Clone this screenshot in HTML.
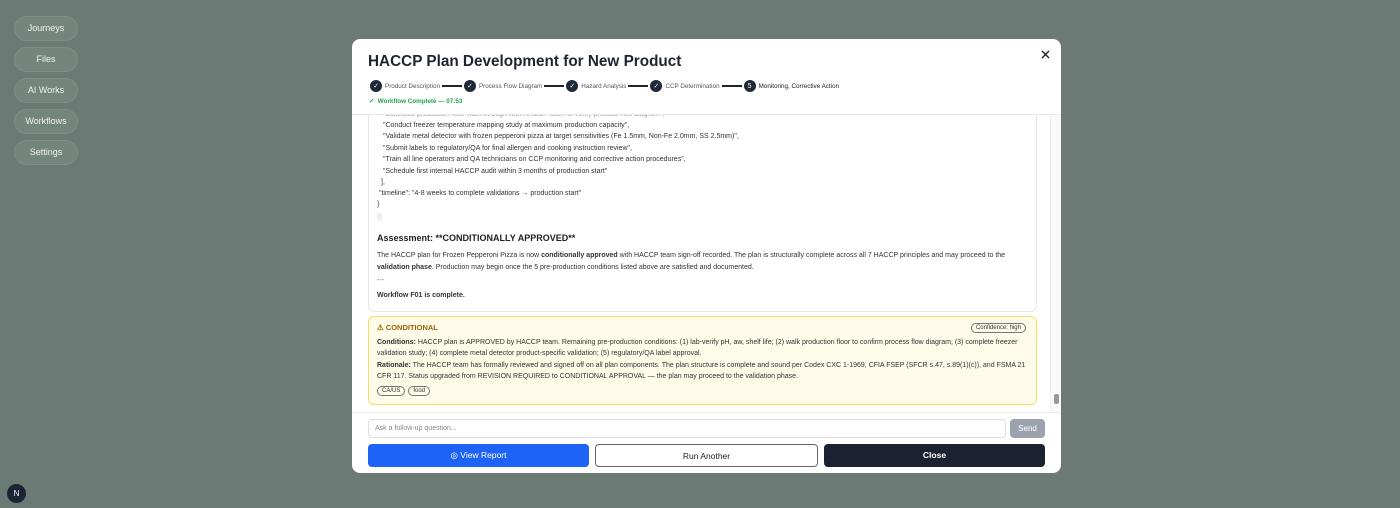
<!DOCTYPE html>
<html><head><meta charset="utf-8"><style>
*{box-sizing:border-box;margin:0;padding:0}
body{width:1400px;height:508px;background:#6b7a74;font-family:"Liberation Sans",sans-serif;position:relative;overflow:hidden;color:#222}
.nav{position:absolute;left:14px;width:64px;height:25px;border-radius:13px;background:#76847e;border:1px solid #7f8d87;color:#eef2f0;font-size:9px;text-align:center;line-height:23px}
.modal{position:absolute;left:352px;top:39px;width:709px;height:434px;background:#fff;border-radius:8px;overflow:hidden}
h1{position:absolute;left:16px;top:14px;font-size:15.3px;font-weight:bold;color:#1f2430}
.steps{position:absolute;left:18px;top:41px;display:flex;align-items:center;font-size:6.3px;color:#555}
.dot{width:12px;height:12px;border-radius:50%;background:#1f2937;color:#fff;font-size:7px;display:inline-flex;align-items:center;justify-content:center;margin-right:3px}
.line{width:20px;height:1.3px;background:#222;margin:0 2px}
.done{position:absolute;left:17px;top:59px;font-size:6.3px;color:#22a550;font-weight:bold}
.scroll{position:absolute;left:0;top:75px;width:709px;height:298px;border-top:1px solid #e8e8e8;overflow:hidden}
.card{position:absolute;left:16px;top:-8px;width:669px;height:205px;border:1px solid #e6e6e6;border-radius:6px;font-size:7px;color:#333}
.code{position:absolute;left:8px;line-height:11.4px}
.sb{position:absolute;left:698px;top:0;width:11px;height:298px;background:#fafafa;border-left:1px solid #eee}
.cond{position:absolute;left:16px;top:277px;width:669px;height:89px;background:#fefbe8;border:1px solid #f4dc6a;border-radius:6px;font-size:7px;color:#333;line-height:11px}
.tag{display:inline-block;border:1px solid #777;border-radius:6px;padding:0 4px;font-size:6px;line-height:8px;margin-right:3px}
.inp{position:absolute;left:16px;top:380px;width:638px;height:19px;border:1px solid #ddd;border-radius:4px;font-size:7px;color:#888;padding:5px 6px}
.send{position:absolute;left:658px;top:380px;width:35px;height:19px;background:#9ca3af;border-radius:4px;color:#fff;font-size:8px;text-align:center;line-height:19px}
.btn{position:absolute;top:405px;height:23px;border-radius:4px;font-size:8.5px;text-align:center;line-height:23px}
</style></head><body>
<div class="nav" style="top:16px">Journeys</div>
<div class="nav" style="top:47px">Files</div>
<div class="nav" style="top:78px">AI Works</div>
<div class="nav" style="top:109px">Workflows</div>
<div class="nav" style="top:140px">Settings</div>
<div style="position:absolute;left:7px;top:484px;width:19px;height:19px;border-radius:50%;background:#1c2434;color:#fff;font-size:8px;text-align:center;line-height:19px">N</div>
<div class="modal">
<h1>HACCP Plan Development for New Product</h1>
<svg style="position:absolute;left:689px;top:11px" width="9" height="9" viewBox="0 0 9 9"><path d="M1 1L8 8M8 1L1 8" stroke="#222" stroke-width="1.4"/></svg>
<div class="steps"><span class="dot">✓</span>Product Description<span class="line"></span><span class="dot">✓</span>Process Flow Diagram<span class="line"></span><span class="dot">✓</span>Hazard Analysis<span class="line"></span><span class="dot">✓</span>CCP Determination<span class="line"></span><span class="dot">5</span><span style="color:#222">Monitoring, Corrective Action</span></div>
<div class="done">✓ &nbsp;Workflow Complete — 07:53</div>
<div class="scroll">
<div class="card">
<div class="code" style="top:1px;left:14px;color:#999">"Schedule production floor walk-through with HACCP team to verify process flow diagram",</div>
<div class="code" style="top:12px;left:14px">"Conduct freezer temperature mapping study at maximum production capacity",<br>"Validate metal detector with frozen pepperoni pizza at target sensitivities (Fe 1.5mm, Non-Fe 2.0mm, SS 2.5mm)",<br>"Submit labels to regulatory/QA for final allergen and cooking instruction review",<br>"Train all line operators and QA technicians on CCP monitoring and corrective action procedures",<br>"Schedule first internal HACCP audit within 3 months of production start"</div>
<div class="code" style="top:69px;left:12px">],</div>
<div class="code" style="top:80px;left:10px">"timeline": "4-8 weeks to complete validations → production start"</div>
<div class="code" style="top:91px;left:8px">}</div>
<div style="position:absolute;left:8px;top:105px;width:5px;height:8px;background:#eee;border-radius:2px"></div>
<div style="position:absolute;left:8px;top:125px;font-size:9px;font-weight:bold;color:#222">Assessment: **CONDITIONALLY APPROVED**</div>
<div style="position:absolute;left:8px;top:142px;width:655px;line-height:12px">The HACCP plan for Frozen Pepperoni Pizza is now <b>conditionally approved</b> with HACCP team sign-off recorded. The plan is structurally complete across all 7 HACCP principles and may proceed to the <b>validation phase</b>. Production may begin once the 5 pre-production conditions listed above are satisfied and documented.</div>
<div style="position:absolute;left:8px;top:169px;color:#666">---</div>
<div style="position:absolute;left:8px;top:184px;font-weight:bold">Workflow F01 is complete.</div>
</div>
<div class="sb"><div style="position:absolute;left:3px;top:279px;width:5px;height:10px;background:#999;border-radius:2px"></div></div>
</div>
<div class="cond">
<div style="position:absolute;left:8px;top:5px;color:#a16207;font-weight:bold;font-size:7.5px">⚠ CONDITIONAL</div>
<div style="position:absolute;right:7px;top:6px" class="tag">Confidence: high</div>
<div style="position:absolute;left:8px;top:20px;width:655px"><b>Conditions:</b> HACCP plan is APPROVED by HACCP team. Remaining pre-production conditions: (1) lab-verify pH, aw, shelf life; (2) walk production floor to confirm process flow diagram; (3) complete freezer validation study; (4) complete metal detector product-specific validation; (5) regulatory/QA label approval.</div>
<div style="position:absolute;left:8px;top:43px;width:655px"><b>Rationale:</b> The HACCP team has formally reviewed and signed off on all plan components. The plan structure is complete and sound per Codex CXC 1-1969, CFIA FSEP (SFCR s.47, s.89(1)(c)), and FSMA 21 CFR 117. Status upgraded from REVISION REQUIRED to CONDITIONAL APPROVAL — the plan may proceed to the validation phase.</div>
<div style="position:absolute;left:8px;top:68px"><span class="tag">CA/US</span><span class="tag">food</span></div>
</div>
<div style="position:absolute;left:0;top:373px;width:709px;border-top:1px solid #eee"></div>
<div class="inp">Ask a follow-up question...</div>
<div class="send">Send</div>
<div class="btn" style="left:16px;width:221px;background:#1d63f5;color:#fff">◎ View Report</div>
<div class="btn" style="left:243px;width:223px;border:1px solid #666;color:#222">Run Another</div>
<div class="btn" style="left:472px;width:221px;background:#1a2130;color:#fff;font-weight:bold">Close</div>
</div>
</body></html>
